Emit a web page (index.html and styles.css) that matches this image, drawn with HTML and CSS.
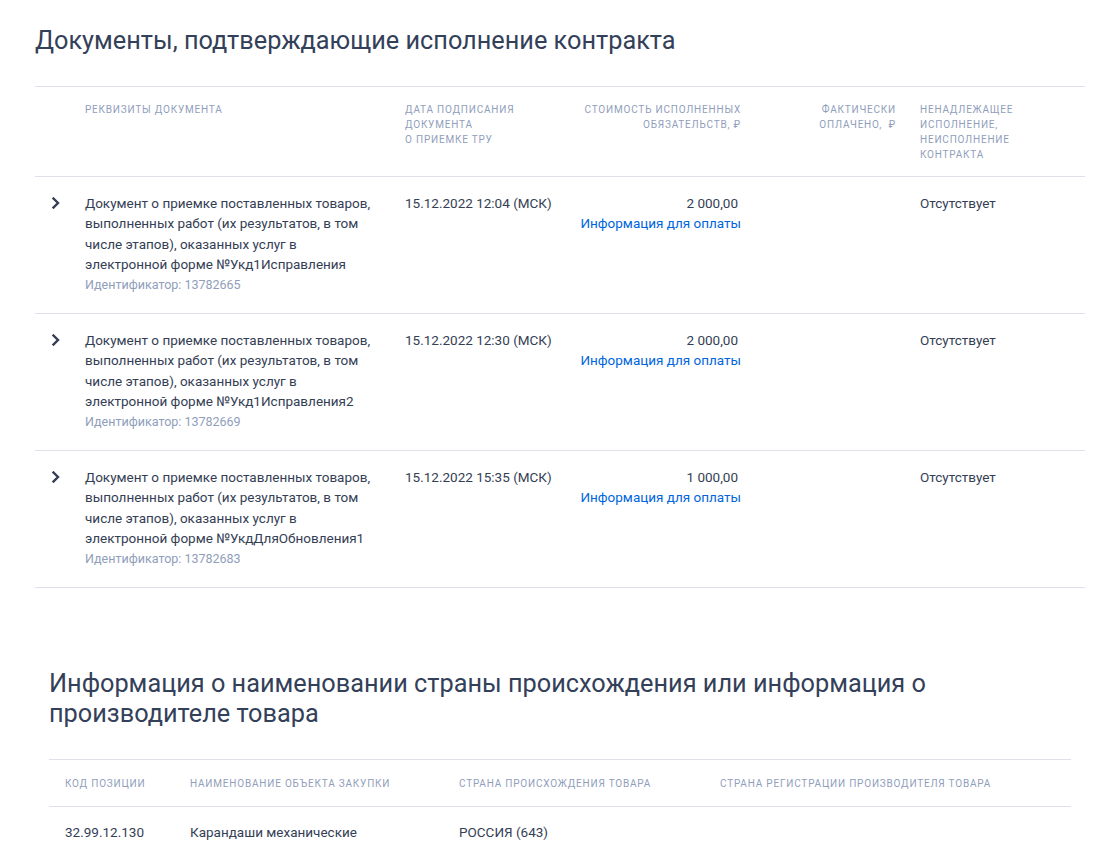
FILE: index.html
```html
<!DOCTYPE html>
<html lang="ru">
<head>
<meta charset="utf-8">
<title>Документы</title>
<link rel="stylesheet" href="styles.css">
</head>
<body>
<div class="page">
  <section class="docs">
    <h2 class="title">Документы, подтверждающие исполнение контракта</h2>
    <div class="table">
      <div class="row head">
        <div class="cell"></div>
        <div class="cell">Реквизиты документа</div>
        <div class="cell">Дата подписания документа<br>о приемке ТРУ</div>
        <div class="cell num">Стоимость исполненных<br>обязательств, ₽</div>
        <div class="cell num">Фактически<br>оплачено,&nbsp; ₽</div>
        <div class="cell narrow">Ненадлежащее исполнение, неисполнение контракта</div>
      </div>

      <div class="row">
        <div class="cell chev"><svg width="10" height="12" viewBox="0 0 10 12"><path d="M2.5 1.5 L7 6 L2.5 10.5" fill="none" stroke="#343e54" stroke-width="2.4" stroke-linecap="square"/></svg></div>
        <div class="cell">
          <div class="doc">Документ о приемке поставленных товаров, выполненных работ (их результатов, в том числе этапов), оказанных услуг в электронной форме №Укд1Исправления</div>
          <div class="ident">Идентификатор: 13782665</div>
        </div>
        <div class="cell">15.12.2022 12:04 (МСК)</div>
        <div class="cell num"><span class="amount">2 000,00</span><br><a class="link" href="#">Информация для оплаты</a></div>
        <div class="cell num"></div>
        <div class="cell">Отсутствует</div>
      </div>

      <div class="row">
        <div class="cell chev"><svg width="10" height="12" viewBox="0 0 10 12"><path d="M2.5 1.5 L7 6 L2.5 10.5" fill="none" stroke="#343e54" stroke-width="2.4" stroke-linecap="square"/></svg></div>
        <div class="cell">
          <div class="doc">Документ о приемке поставленных товаров, выполненных работ (их результатов, в том числе этапов), оказанных услуг в электронной форме №Укд1Исправления2</div>
          <div class="ident">Идентификатор: 13782669</div>
        </div>
        <div class="cell">15.12.2022 12:30 (МСК)</div>
        <div class="cell num"><span class="amount">2 000,00</span><br><a class="link" href="#">Информация для оплаты</a></div>
        <div class="cell num"></div>
        <div class="cell">Отсутствует</div>
      </div>

      <div class="row last">
        <div class="cell chev"><svg width="10" height="12" viewBox="0 0 10 12"><path d="M2.5 1.5 L7 6 L2.5 10.5" fill="none" stroke="#343e54" stroke-width="2.4" stroke-linecap="square"/></svg></div>
        <div class="cell">
          <div class="doc">Документ о приемке поставленных товаров, выполненных работ (их результатов, в том числе этапов), оказанных услуг в электронной форме №УкдДляОбновления1</div>
          <div class="ident">Идентификатор: 13782683</div>
        </div>
        <div class="cell">15.12.2022 15:35 (МСК)</div>
        <div class="cell num"><span class="amount">1 000,00</span><br><a class="link" href="#">Информация для оплаты</a></div>
        <div class="cell num"></div>
        <div class="cell">Отсутствует</div>
      </div>
    </div>
  </section>

  <section class="origin">
    <h2 class="title two">Информация о наименовании страны происхождения или информация о производителе товара</h2>
    <div class="table2">
      <div class="row2 head2">
        <div class="cell2">Код позиции</div>
        <div class="cell2">Наименование объекта закупки</div>
        <div class="cell2">Страна происхождения товара</div>
        <div class="cell2">Страна регистрации производителя товара</div>
      </div>
      <div class="row2">
        <div class="cell2">32.99.12.130</div>
        <div class="cell2">Карандаши механические</div>
        <div class="cell2">РОССИЯ (643)</div>
        <div class="cell2"></div>
      </div>
    </div>
  </section>
</div>
</body>
</html>
```

FILE: styles.css
```css
* { box-sizing: border-box; }
html, body { margin: 0; padding: 0; background: #fff; }
body {
  font-family: Roboto, "Liberation Sans", Arial, sans-serif;
  color: #343e54;
  font-size: 13.5px;
}
.page {
  width: 1050px;
  margin-left: 35px;
  padding-top: 25px;
}
.title {
  margin: 0;
  font-size: 25.3px;
  font-weight: 400;
  line-height: 32px;
  color: #334059;
}
.docs .title { margin-bottom: 29px; }

.table { border-bottom: 1px solid #dfe1ea; }
.row {
  display: grid;
  grid-template-columns: 50px 320px 175px 181px 159px 1fr;
  border-top: 1px solid #dfe1ea;
  line-height: 20.4px;
  padding: 16px 0 18.4px;
}
.row.head {
  padding: 15px 0 14px;
  font-size: 10px;
  line-height: 15px;
  text-transform: uppercase;
  letter-spacing: 0.8px;
  color: #909ebb;
}
.cell { padding-right: 20px; }
.row .cell:nth-child(2) { padding-right: 28px; }
.row .cell:nth-child(5) { padding-right: 24px; }
.cell.num { text-align: right; }
.cell.narrow { padding-right: 60px; }
.chev { padding: 4px 0 0 16px; }
.chev svg { display: block; }
.ident {
  font-size: 12.5px;
  line-height: 20px;
  color: #909ebb;
}
.amount { margin-right: 3px; }
.link {
  color: #0065dd;
  text-decoration: none;
  white-space: nowrap;
}

.origin {
  padding: 81px 14px 0;
}
.title.two {
  line-height: 30px;
  max-width: 960px;
  margin-bottom: 30px;
}
.row2 {
  display: grid;
  grid-template-columns: 125px 269px 261px 1fr;
  border-top: 1px solid #dfe1ea;
  padding: 15px 0;
  line-height: 20px;
}
.row2.head2 {
  padding: 16px 0 15px;
  font-size: 10px;
  line-height: 15px;
  text-transform: uppercase;
  letter-spacing: 0.8px;
  color: #909ebb;
}
.cell2 { padding-left: 16px; }
```
